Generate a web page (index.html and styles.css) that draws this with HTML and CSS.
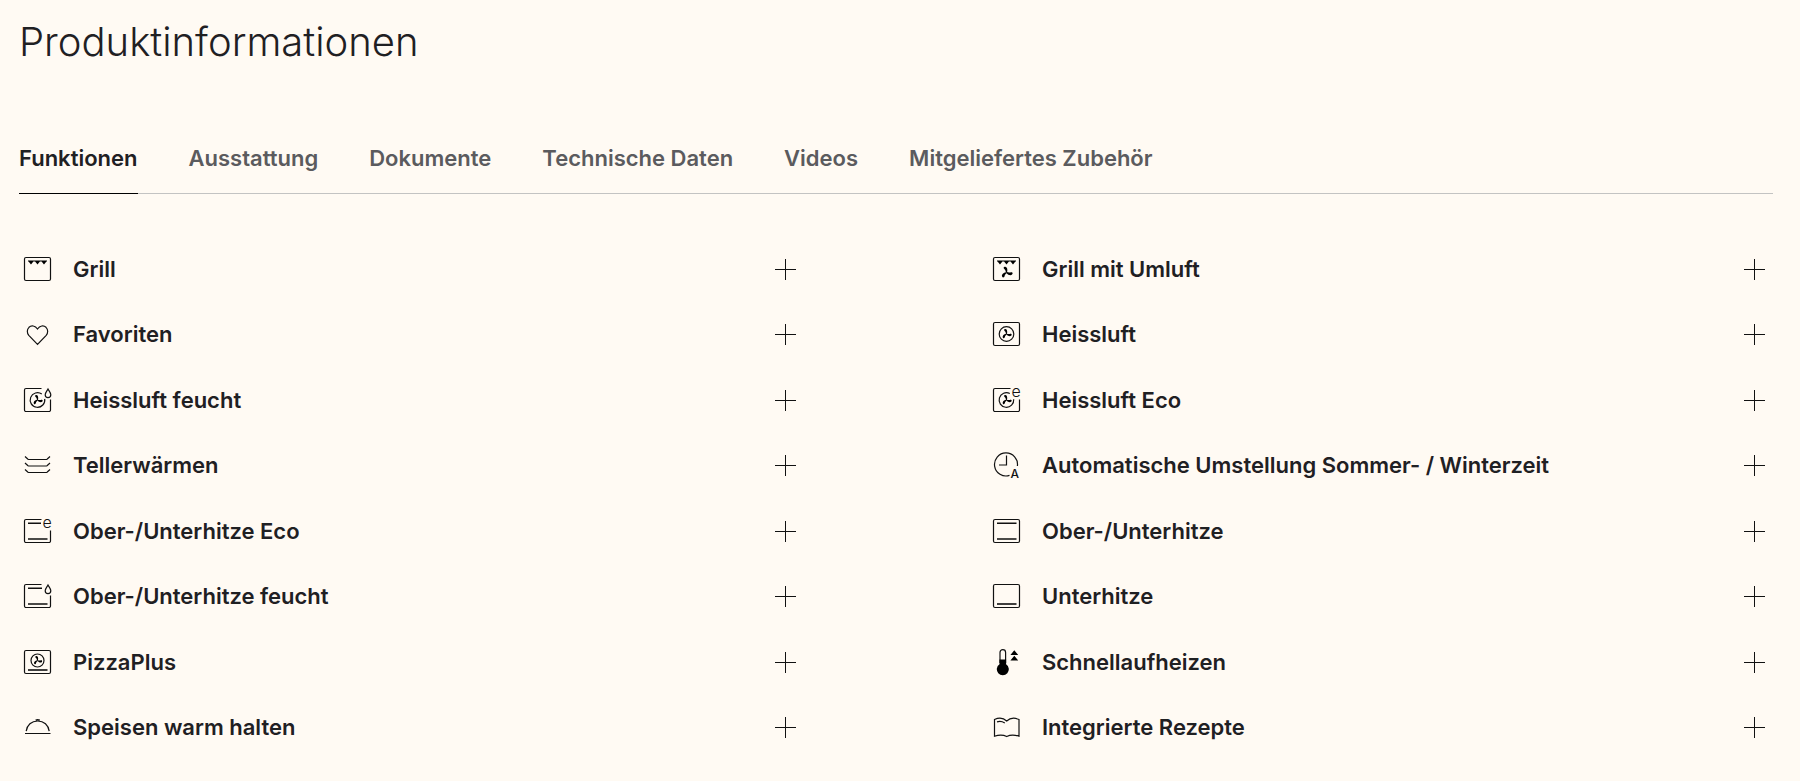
FILE: index.html
```html
<!DOCTYPE html>
<html lang="de">
<head>
    <meta charset="UTF-8">
    <meta name="viewport" content="width=device-width, initial-scale=1.0">
    <title>Produktinformationen</title>
    <link rel="stylesheet" href="styles.css">
</head>
<body>
    <!-- Shared icon parts -->
    <svg class="sprite" aria-hidden="true">
        <symbol id="plus" viewBox="0 0 36 36">
            <path d="M7 18.5h21M17.5 8v21"/>
        </symbol>
        <symbol id="frame" viewBox="0 0 36 36">
            <rect x="5.5" y="6.5" width="26" height="23" rx="1.5"/>
        </symbol>
        <symbol id="frame-open" viewBox="0 0 36 36">
            <path d="M22.5 6.5H7A1.5 1.5 0 0 0 5.5 8v20A1.5 1.5 0 0 0 7 29.5h23a1.500 1.500 0 0 0 1.500-1.500V17.500"/>
        </symbol>
        <symbol id="fan" viewBox="-6 -6 12 12">
            <g class="solid">
                <path id="blade" d="M.5-.3C1.100-2.400.9-5-1.200-5.400-3-5.600-3-3.900-1.800-3-.9-2.300-.7-1-.5.3z"/>
                <use href="#blade" transform="rotate(120)"/>
                <use href="#blade" transform="rotate(240)"/>
            </g>
        </symbol>
        <symbol id="grill" viewBox="0 0 36 36">
            <path class="solid" d="M9 9.5h19v1h-.6L25 13.600l-2.400-3.100h-1.700l-2.400 3.100-2.400-3.100h-1.700L12 13.600l-2.400-3.100H9z"/>
        </symbol>
        <symbol id="drop" viewBox="0 0 36 36">
            <path d="M29 7c1 2 2.800 3.800 2.800 5.800a2.800 2.800 0 0 1-5.600 0C26.200 10.800 28 9 29 7z"/>
        </symbol>
    </svg>

    <h1>Produktinformationen</h1>

    <div class="tabs" role="tablist">
        <button class="tab active" role="tab" aria-selected="true">Funktionen</button>
        <button class="tab" role="tab">Ausstattung</button>
        <button class="tab" role="tab">Dokumente</button>
        <button class="tab" role="tab">Technische Daten</button>
        <button class="tab" role="tab">Videos</button>
        <button class="tab" role="tab">Mitgeliefertes Zubehör</button>
    </div>

    <div class="features" role="tabpanel">
        <button class="feature">
            <svg class="icon" viewBox="0 0 36 36"><use href="#frame"/><use href="#grill"/></svg>
            <span class="label">Grill</span>
            <svg class="icon plus"><use href="#plus"/></svg>
        </button>
        <button class="feature">
            <svg class="icon" viewBox="0 0 36 36"><use href="#frame"/><use href="#grill"/><use href="#fan" x="12" y="15" width="13" height="13"/></svg>
            <span class="label">Grill mit Umluft</span>
            <svg class="icon plus"><use href="#plus"/></svg>
        </button>
        <button class="feature">
            <svg class="icon" viewBox="0 0 36 36"><path d="M18.500 28.300 9.800 19.300C7.800 17 7.800 13.500 10 11.300c2.300-2.200 6.200-1.800 8.500 1.700 2.300-3.500 6.200-3.900 8.500-1.700 2.200 2.200 2.200 5.700.2 8z"/></svg>
            <span class="label">Favoriten</span>
            <svg class="icon plus"><use href="#plus"/></svg>
        </button>
        <button class="feature">
            <svg class="icon" viewBox="0 0 36 36"><use href="#frame"/><circle cx="18.5" cy="18" r="7.3"/><use href="#fan" x="13" y="12.5" width="11" height="11"/></svg>
            <span class="label">Heissluft</span>
            <svg class="icon plus"><use href="#plus"/></svg>
        </button>
        <button class="feature">
            <svg class="icon" viewBox="0 0 36 36"><use href="#frame-open"/><path d="M22.800 12.100A7.300 7.300 0 1 0 25.700 16.800"/><use href="#fan" x="13" y="12.5" width="11" height="11"/><use href="#drop"/></svg>
            <span class="label">Heissluft feucht</span>
            <svg class="icon plus"><use href="#plus"/></svg>
        </button>
        <button class="feature">
            <svg class="icon" viewBox="0 0 36 36"><use href="#frame-open"/><path d="M21.800 11.500A7.300 7.300 0 1 0 25.700 17.300"/><use href="#fan" x="13" y="12.5" width="11" height="11"/><text class="letter-e" x="23.5" y="15">e</text></svg>
            <span class="label">Heissluft Eco</span>
            <svg class="icon plus"><use href="#plus"/></svg>
        </button>
        <button class="feature">
            <svg class="icon" viewBox="0 0 36 36"><path d="M6 9.500l3 2.700q.5.300 1.500.3h16q1 0 1.500-.3l3-2.700M6 16l3 2.700q.5.300 1.500.3h16q1 0 1.500-.3l3-2.700M6 22.500l3 2.700q.5.300 1.500.3h16q1 0 1.500-.3l3-2.700"/></svg>
            <span class="label">Tellerwärmen</span>
            <svg class="icon plus"><use href="#plus"/></svg>
        </button>
        <button class="feature">
            <svg class="icon" viewBox="0 0 36 36"><path d="M21.500 28.400A11.500 11.500 0 1 1 29.400 19M18.500 8.500v9.500H11"/><text class="letter-a" x="22.5" y="31">A</text></svg>
            <span class="label">Automatische Umstellung Sommer- / Winterzeit</span>
            <svg class="icon plus"><use href="#plus"/></svg>
        </button>
        <button class="feature">
            <svg class="icon" viewBox="0 0 36 36"><use href="#frame-open"/><path class="bar" d="M9 10.300h13M9 26h19.500"/><text class="letter-e" x="23.5" y="15">e</text></svg>
            <span class="label">Ober-/Unterhitze Eco</span>
            <svg class="icon plus"><use href="#plus"/></svg>
        </button>
        <button class="feature">
            <svg class="icon" viewBox="0 0 36 36"><use href="#frame"/><path class="bar" d="M9 10.300h19.500M9 26h19.500"/></svg>
            <span class="label">Ober-/Unterhitze</span>
            <svg class="icon plus"><use href="#plus"/></svg>
        </button>
        <button class="feature">
            <svg class="icon" viewBox="0 0 36 36"><use href="#frame-open"/><path class="bar" d="M9 10.300h14M9 26h19.500"/><use href="#drop"/></svg>
            <span class="label">Ober-/Unterhitze feucht</span>
            <svg class="icon plus"><use href="#plus"/></svg>
        </button>
        <button class="feature">
            <svg class="icon" viewBox="0 0 36 36"><use href="#frame"/><path class="bar" d="M9 26h19.500"/></svg>
            <span class="label">Unterhitze</span>
            <svg class="icon plus"><use href="#plus"/></svg>
        </button>
        <button class="feature">
            <svg class="icon" viewBox="0 0 36 36"><use href="#frame"/><circle cx="18.5" cy="16.5" r="6.5"/><use href="#fan" x="13.5" y="11.5" width="10" height="10"/><path class="bar" d="M9 26h19.500"/></svg>
            <span class="label">PizzaPlus</span>
            <svg class="icon plus"><use href="#plus"/></svg>
        </button>
        <button class="feature">
            <svg class="icon" viewBox="0 0 36 36"><path d="M12 19V8.500a2.800 2.800 0 0 1 5.600 0V19"/><path class="solid" d="M11.500 15.500h6.600v4.700a6 6 0 1 1-6.600 0zM26.300 6.200l3.900 4.800h-7.800zM26.300 11.700l3.900 4.800h-7.800z"/></svg>
            <span class="label">Schnellaufheizen</span>
            <svg class="icon plus"><use href="#plus"/></svg>
        </button>
        <button class="feature">
            <svg class="icon" viewBox="0 0 36 36"><path d="M6 24.500h25.500M7.200 22.200C8 16 12.500 12 18.700 12s10.700 4 11.500 10.200"/><path class="bar" d="M16.700 11.200q2-1 4 0"/></svg>
            <span class="label">Speisen warm halten</span>
            <svg class="icon plus"><use href="#plus"/></svg>
        </button>
        <button class="feature">
            <svg class="icon" viewBox="0 0 36 36"><path d="M6.500 10.500c4.500-2 9-1.500 12.200 1.500 3.300-3 7.800-3.500 12.300-1.500V27.200c-4.500-1.500-8.700-1.500-12.300.3-3.500-1.800-7.700-1.800-12.200-.3zM9 12.800c3-.8 5.500-.3 7.800 1.200"/></svg>
            <span class="label">Integrierte Rezepte</span>
            <svg class="icon plus"><use href="#plus"/></svg>
        </button>
    </div>
</body>
</html>
```
FILE: styles.css
```css
* {
    box-sizing: border-box;
}
body {
    display: flex;
    flex-direction: column;
    min-height: 100vh;
    margin: 0;
    padding: 16px 27px 21px 19px;
    font-family: Inter, "Liberation Sans", sans-serif;
    color: #1f2023;
    background-color: #fffaf3;
}
h1 {
    margin: 0 0 64px;
    font-size: 40px;
    line-height: 52px;
    font-weight: 300;
}
button {
    padding: 0;
    border: none;
    background: none;
    color: inherit;
    font-family: inherit;
    font-size: 22px;
    line-height: 28px;
    font-weight: 600;
    text-align: left;
    cursor: pointer;
}
.tabs {
    display: flex;
    gap: 51px;
    margin-bottom: 42px;
    box-shadow: inset 0 -1px #c3c3c2;
}
.tab {
    padding: 12px 0 21px;
    border-bottom: 1px solid transparent;
    color: #5b5b5e;
}
.tab.active {
    border-bottom-color: #000;
    color: #1f2023;
}
.features {
    flex: 1;
    display: grid;
    grid-template-columns: 1fr 1fr;
    grid-auto-rows: 1fr;
    column-gap: 184px;
}
.feature {
    display: flex;
    align-items: center;
    gap: 18px;
}
.label {
    flex: 1;
}
.sprite {
    position: absolute;
    width: 0;
    height: 0;
}
.icon {
    flex: none;
    width: 36px;
    height: 36px;
    fill: none;
    stroke: #111;
    stroke-width: 1.2;
}
.plus {
    stroke-width: 1;
}
.bar {
    stroke-width: 1.6;
}
.solid {
    fill: #000;
    stroke: none;
}
.letter-e, .letter-a {
    fill: #111;
    stroke: none;
    font-size: 16px;
    font-weight: 300;
}
.letter-a {
    font-size: 12px;
    font-weight: 500;
}
```
